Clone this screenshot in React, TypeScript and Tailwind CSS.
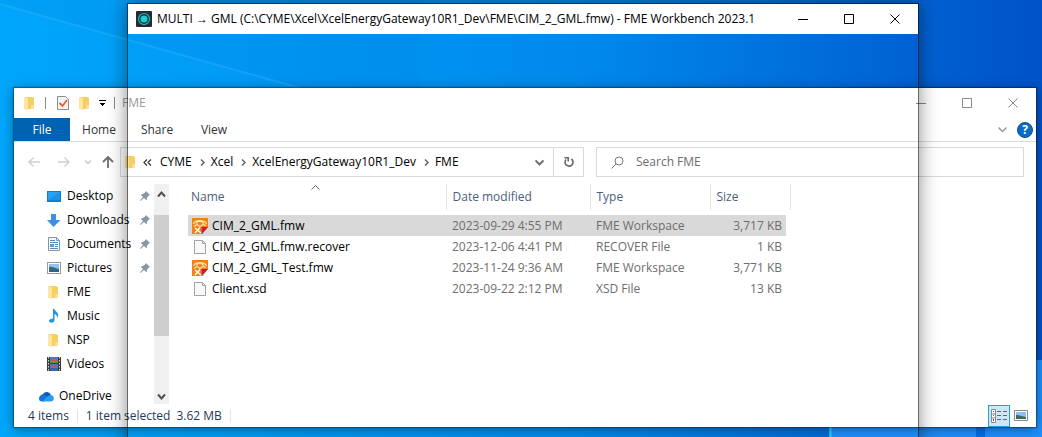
import { ReactNode } from "react"
import clsx from "clsx"

const places = [
  { name: "Desktop", icon: <DesktopIcon />, pinned: true },
  { name: "Downloads", icon: <DownloadIcon />, pinned: true },
  { name: "Documents", icon: <DocumentIcon />, pinned: true },
  { name: "Pictures", icon: <PictureIcon />, pinned: true },
  { name: "FME", icon: <FolderIcon />, pinned: false },
  { name: "Music", icon: <MusicIcon />, pinned: false },
  { name: "NSP", icon: <FolderIcon />, pinned: false },
  { name: "Videos", icon: <VideoIcon />, pinned: false },
]

const files = [
  { name: "CIM_2_GML.fmw", date: "2023-09-29 4:55 PM", type: "FME Workspace", size: "3,717 KB", icon: <FmeIcon />, selected: true },
  { name: "CIM_2_GML.fmw.recover", date: "2023-12-06 4:41 PM", type: "RECOVER File", size: "1 KB", icon: <FileIcon />, selected: false },
  { name: "CIM_2_GML_Test.fmw", date: "2023-11-24 9:36 AM", type: "FME Workspace", size: "3,771 KB", icon: <FmeIcon />, selected: false },
  { name: "Client.xsd", date: "2023-09-22 2:12 PM", type: "XSD File", size: "13 KB", icon: <FileIcon />, selected: false },
]

const crumbs = ["CYME", "Xcel", "XcelEnergyGateway10R1_Dev", "FME"]

function FolderIcon() {
  return (
    <svg width="16" height="16" viewBox="0 0 16 16">
      <path d="M3 2h7l2 1v11H3z" fill="#f5cf62" />
      <path d="M2 2l4 1v12l-4-1z" fill="#ffe69b" />
      <path d="M9.500 10h2.500v4H9z" fill="#fbe29a" />
    </svg>
  )
}

function DesktopIcon() {
  return (
    <svg width="16" height="16" viewBox="0 0 16 16">
      <rect x="1" y="3" width="14" height="11" fill="#0a7fd6" />
      <path d="M2 4h12v8H2z" fill="#27a4f2" />
      <path d="M2 12L14 4v8z" fill="#1c93e6" />
    </svg>
  )
}

function DownloadIcon() {
  return (
    <svg width="16" height="16" viewBox="0 0 16 16">
      <path d="M5 2h5v6h4.500L7.500 15 1 8h4z" fill="#3b8ee0" />
    </svg>
  )
}

function DocumentIcon() {
  return (
    <svg width="16" height="16" viewBox="0 0 16 16">
      <path d="M2.500 1.500h8l3 3v10h-11z" fill="#f7f9fb" stroke="#8b949c" />
      <path d="M10.500 1.500v3h3" fill="none" stroke="#8b949c" />
      <path d="M4 4.500h5M4 6.500h8M9 8.500h3M9 10.500h3M4 12.500h8" stroke="#4d8fc9" />
      <rect x="4" y="8" width="4" height="3" fill="#5d9bd0" />
    </svg>
  )
}

function PictureIcon() {
  return (
    <svg width="16" height="16" viewBox="0 0 16 16">
      <rect x="1.500" y="2.500" width="13" height="11" fill="#fff" stroke="#9a9a9a" />
      <rect x="3" y="4" width="10" height="8" fill="#8fc4ee" />
      <path d="M3 7c3-1 5 1 10 2v2H3z" fill="#3c6a6e" />
      <path d="M3 10h10v2H3z" fill="#2f5f9c" />
    </svg>
  )
}

function MusicIcon() {
  return (
    <svg width="16" height="16" viewBox="0 0 16 16">
      <path d="M7 1h1.500c.3 2.500 3.700 3 3.700 6 0 1.200-.5 2-1.200 2.800C11.300 7.500 10 6.500 8.500 6v6c0 1.800-1.300 2.700-2.800 2.700S3 14 3 12.800 4.300 10.500 7 10.700z" fill="#1c95e8" />
    </svg>
  )
}

function VideoIcon() {
  return (
    <svg width="16" height="16" viewBox="0 0 16 16">
      <rect x="1" y="1" width="14" height="14" fill="#3a3a3a" />
      <path d="M2.500 1v14M13.500 1v14" stroke="#dcdcdc" strokeDasharray="1.500 1.500" />
      <rect x="4" y="1" width="8" height="6" fill="#4a79c9" />
      <path d="M5 5l3-3 3 3z" fill="#d9572c" />
      <path d="M4 5h8v2H4z" fill="#5c9d3d" />
      <rect x="4" y="8" width="8" height="7" fill="#4a79c9" />
      <path d="M5 12l3-3 3 3z" fill="#d9572c" />
      <path d="M4 12h8v3H4z" fill="#3c62a8" />
    </svg>
  )
}

function OneDriveIcon() {
  return (
    <svg width="17" height="16" viewBox="0 0 17 16">
      <path d="M5 6a4.500 4.500 0 0 1 8 1l-3 4-6-4z" fill="#0a5cb8" />
      <path d="M1 10.500C1 8 3 6 6 6.500l5 3-5 4H4a3 3 0 0 1-3-3z" fill="#0f77d4" />
      <path d="M12.500 7a3.300 3.300 0 0 1 .8 6.500H4.200L10 8z" fill="#2a9df0" />
    </svg>
  )
}

function FileIcon() {
  return (
    <svg width="16" height="16" viewBox="0 0 16 16">
      <path d="M2.500 1.500h8l3 3v10h-11z" fill="#f8f8f8" stroke="#a3a3a3" />
      <path d="M10.500 1.500v3h3" fill="none" stroke="#a3a3a3" />
    </svg>
  )
}

function FmeIcon() {
  return (
    <svg width="16" height="16" viewBox="0 0 16 16">
      <path d="M0 0h16v9l-6 7H0z" fill="#ee8212" />
      <path d="M1.500 6c1-4 11-5 13 0M4 5.500l2-2h3l3 2M2 8.500l3-2 3 2 3-2 3 1" fill="none" stroke="#ffe0b0" strokeWidth="1.200" />
      <path d="M3 10l6 5M3 15l5-5.500" fill="none" stroke="#fff" strokeWidth="1.400" />
      <path d="M9.500 9H16l-6 7z" fill="#c8202f" />
    </svg>
  )
}

function PinIcon() {
  return (
    <svg width="12" height="12" viewBox="0 0 12 12">
      <path d="M7 1l4 4-1.200.6L8 8l-.4 2.500L5 8 1.500 11 1 10.500 4 7 1.500 4.400 4 4l2.400-1.800z" fill="#8996a3" />
    </svg>
  )
}

function Chevron({ d, size = 9, color = "#666", width = 1.5 }: { d: string; size?: number; color?: string; width?: number }) {
  return (
    <svg width={size} height={size} viewBox="0 0 9 9" className="shrink-0">
      <path d={d} fill="none" stroke={color} strokeWidth={width} />
    </svg>
  )
}

function CaptionButtons({ color }: { color: string }) {
  const shapes = [
    { label: "Minimize", d: "M0 5.500h10" },
    { label: "Maximize", d: "M.5.5h9v9h-9z" },
    { label: "Close", d: "M.5.5l9 9M9.500.5l-9 9" },
  ]
  return (
    <div className="flex shrink-0">
      {shapes.map((shape) => (
        <button key={shape.label} aria-label={shape.label} className="flex h-7 w-[46px] items-center justify-center">
          <svg width="10" height="10" viewBox="0 0 10 10">
            <path d={shape.d} fill="none" stroke={color} />
          </svg>
        </button>
      ))}
    </div>
  )
}

function IconButton({ label, className, children }: { label: string; className?: string; children: ReactNode }) {
  return (
    <button aria-label={label} className={clsx("flex shrink-0 items-center justify-center", className)}>
      {children}
    </button>
  )
}

function Wallpaper() {
  return (
    <div className="absolute inset-0 bg-linear-to-r from-[#00a6fb] via-[#008aec] via-55% to-[#0052c8]">
      <svg className="h-full w-full" viewBox="0 0 1042 437" preserveAspectRatio="none">
        <path d="M0 0h420v88H300L0 4z" fill="#0070d0" fillOpacity=".1" />
        <path d="M0 4L300 88" stroke="#3db6ff" strokeOpacity=".35" strokeWidth="2" />
        <path d="M829 420h207V360h6v77H829z" fill="#1e90ff" />
        <path d="M830.500 420v17" stroke="#20d8ff" strokeWidth="2" />
        <path d="M976 420h9v17h-9z" fill="#0070e8" />
      </svg>
    </div>
  )
}

function Explorer() {
  return (
    <section className="absolute top-[88px] right-1.5 bottom-2.5 left-3.5 flex flex-col bg-white shadow-[0_0_1px_1px_rgba(0,0,0,0.3),0_2px_12px_rgba(0,0,0,0.4)]">
      <header className="flex h-[30px] shrink-0 items-center justify-between">
        <div className="flex items-center pl-2 text-[#999]">
          <FolderIcon />
          <span className="mx-[7px] h-3 w-px bg-[#888]" />
          <IconButton label="Properties" className="ml-0.5">
            <svg width="16" height="16" viewBox="0 0 16 16">
              <path d="M2.500 1.500h8l3 3v10h-11z" fill="#f4f4f4" stroke="#8c8c8c" />
              <path d="M4.500 8l3 3 4.500-6" fill="none" stroke="#f0602c" strokeWidth="1.800" />
            </svg>
          </IconButton>
          <IconButton label="New folder" className="ml-1.5">
            <FolderIcon />
          </IconButton>
          <IconButton label="Customize toolbar" className="ml-1.5">
            <svg width="8" height="8" viewBox="0 0 8 8">
              <path d="M0 1h7v1H0zM1 4h5v1H5v1H4v1H3V6H2V5H1z" fill="#000" />
            </svg>
          </IconButton>
          <span className="mx-[7px] h-3 w-px bg-[#888]" />
          <h2>FME</h2>
        </div>
        <CaptionButtons color="#888" />
      </header>

      <nav className="flex h-6 shrink-0 items-center border-b border-[#dadbdc] text-[#333]">
        <button className="h-full w-14 bg-[#0063b1] text-white">File</button>
        <button className="h-full w-[58px]">Home</button>
        <button className="h-full w-[58px]">Share</button>
        <button className="h-full w-14">View</button>
        <IconButton label="Expand ribbon" className="mr-2.5 ml-auto">
          <Chevron d="M.5 2.500l4 4 4-4" color="#999" />
        </IconButton>
        <IconButton label="Help" className="mr-[3px] h-4 w-4 rounded-full border border-[#0a4f8c] bg-[#0a6cc8] font-bold text-white">
          ?
        </IconButton>
      </nav>

      <div className="flex h-10 shrink-0 items-center pr-3 pl-3">
        <IconButton label="Back" className="w-4">
          <svg width="12" height="12" viewBox="0 0 12 12">
            <path d="M12 6H1M5.500 1.500L1 6l4.500 4.500" fill="none" stroke="#d0d0d0" strokeWidth="1.500" />
          </svg>
        </IconButton>
        <IconButton label="Forward" className="ml-3.5 w-4">
          <svg width="12" height="12" viewBox="0 0 12 12">
            <path d="M0 6h11M6.500 1.500L11 6l-4.500 4.500" fill="none" stroke="#d0d0d0" strokeWidth="1.500" />
          </svg>
        </IconButton>
        <IconButton label="Recent locations" className="ml-2 w-4">
          <Chevron d="M1 3l3.500 3L8 3" size={8} color="#ccc" />
        </IconButton>
        <IconButton label="Up" className="ml-1 w-4">
          <svg width="12" height="12" viewBox="0 0 12 12">
            <path d="M6 12V1M1 6l5-5 5 5" fill="none" stroke="#6e6e6e" strokeWidth="1.800" />
          </svg>
        </IconButton>

        <div className="ml-1 flex h-[30px] w-[464px] shrink-0 items-center border border-[#d9d9d9] text-black">
          <span className="ml-0.5"><FolderIcon /></span>
          <span className="ml-1">
            <svg width="9" height="9" viewBox="0 0 9 9">
              <path d="M4 1.500l-3 3 3 3M8 1.500l-3 3 3 3" fill="none" stroke="#333" strokeWidth="1.200" />
            </svg>
          </span>
          {crumbs.map((crumb, index) => (
            <span key={crumb} className="flex items-center">
              {index > 0 && (
                <span className="ml-1.5">
                  <Chevron d="M3 1.500l3 3-3 3" />
                </span>
              )}
              <button className={index > 0 ? "ml-1" : "ml-2"}>{crumb}</button>
            </span>
          ))}
          <IconButton label="Previous locations" className="ml-auto w-7">
            <Chevron d="M.5 2.500l4 4 4-4" width={1.8} />
          </IconButton>
          <IconButton label="Refresh" className="h-full w-[30px] border-l border-[#d9d9d9]">
            <svg width="12" height="12" viewBox="0 0 12 12">
              <path d="M8.500 3A4 4 0 1 1 3 3.500" fill="none" stroke="#666" strokeWidth="1.600" />
              <path d="M1.500 1.800H5.200V5.500" fill="none" stroke="#666" strokeWidth="1.500" />
            </svg>
          </IconButton>
        </div>

        <label className="ml-3 flex h-[30px] min-w-0 grow items-center border border-[#d9d9d9] pl-3.5">
          <svg width="13" height="13" viewBox="0 0 13 13">
            <circle cx="8" cy="5" r="4" fill="none" stroke="#777" />
            <path d="M5 8l-4.500 4.500" stroke="#777" />
          </svg>
          <input aria-label="Search FME" placeholder="Search FME" className="ml-3 min-w-0 grow outline-none placeholder:text-[#6d6d6d]" />
        </label>
      </div>

      <div className="flex min-h-0 grow pt-0.5">
        <aside className="w-[140px] shrink-0 text-black">
          {places.map((place) => (
            <a key={place.name} href="#" className="flex h-6 items-center pr-[3px] pl-8">
              {place.icon}
              <span className="ml-[5px]">{place.name}</span>
              {place.pinned && (
                <span className="ml-auto">
                  <PinIcon />
                </span>
              )}
            </a>
          ))}
          <a href="#" className="mt-2 flex h-6 items-center pl-6">
            <OneDriveIcon />
            <span className="ml-1">OneDrive</span>
          </a>
        </aside>

        <div className="flex w-[15px] shrink-0 flex-col bg-[#f0f0f0]">
          <IconButton label="Scroll up" className="h-5">
            <Chevron d="M1 6.500l3.500-4 3.500 4" width={2} color="#505050" />
          </IconButton>
          <div className="mt-[11px] h-[121px] bg-[#cdcdcd]" />
          <IconButton label="Scroll down" className="mt-auto h-4">
            <Chevron d="M1 2.500l3.500 4 3.500-4" width={2} color="#505050" />
          </IconButton>
        </div>

        <div className="relative ml-[19px]">
          <span className="absolute top-0 left-[123px]">
            <Chevron d="M.5 5.500l4-4 4 4" width={1} />
          </span>
          <table className="w-[602px] table-fixed border-collapse text-left">
            <colgroup>
              <col className="w-[258px]" />
              <col className="w-36" />
              <col className="w-[120px]" />
              <col className="w-[76px]" />
              <col className="w-1" />
            </colgroup>
            <thead className="text-[#4c607a]">
              <tr className="h-[26px]">
                <th className="border-r border-[#e5e5e5] pl-[3px] font-normal">Name</th>
                <th className="border-r border-[#e5e5e5] pl-1.5 font-normal">Date modified</th>
                <th className="border-r border-[#e5e5e5] pl-1.5 font-normal">Type</th>
                <th colSpan={2} className="border-r border-[#e5e5e5] pl-1.5 font-normal">Size</th>
              </tr>
            </thead>
            <tbody className="text-[#6d6d6d]">
              <tr className="h-[5px]" />
              {files.map((file) => {
                const fill = file.selected && "bg-[#d9d9d9]"
                return (
                  <tr key={file.name} className="h-[21px]">
                    <td className={clsx("pl-1 text-black", fill)}>
                      <span className="flex items-center gap-1">
                        {file.icon}
                        {file.name}
                      </span>
                    </td>
                    <td className={clsx("pl-1.5", fill)}>{file.date}</td>
                    <td className={clsx("pl-1.5", fill)}>{file.type}</td>
                    <td className={clsx("pr-1 text-right", fill)}>{file.size}</td>
                  </tr>
                )
              })}
            </tbody>
          </table>
        </div>
      </div>

      <footer className="flex h-[23px] shrink-0 items-center pr-2 pl-3.5 text-[#1e395b]">
        <span>4 items</span>
        <span className="mx-2 h-3.5 w-px bg-[#e5e5e5]" />
        <span>1 item selected</span>
        <span className="ml-1.5">3.62 MB</span>
        <span className="ml-2 h-3.5 w-px bg-[#e5e5e5]" />
        <IconButton label="Details view" className="ml-auto h-[22px] w-[22px] border border-[#26a0da] bg-[#cce8f6]">
          <svg width="16" height="14" viewBox="0 0 16 14">
            <path d="M.5.5h4v13h-4zM.5 5h4M.5 9h4" fill="#fff" stroke="#888" />
            <path d="M2 2h1v1H2z" fill="#555" />
            <path d="M2 6h1v1H2z" fill="#2a7fd0" />
            <path d="M2 10h1v2H2z" fill="#d02020" />
            <path d="M6 2.500h4M12 2.500h4M6 6.500h4M12 6.500h4M6 10.500h4M12 10.500h4" stroke="#666" />
          </svg>
        </IconButton>
        <IconButton label="Large icons view" className="ml-1">
          <svg width="14" height="11" viewBox="0 0 14 11">
            <path d="M.5.5h13v10H.5z" fill="#fff" stroke="#888" />
            <path d="M2 2h10v7H2z" fill="#8cc0f0" />
            <path d="M2 5c3 0 5 1 10 2v2H2z" fill="#3c6a5e" />
          </svg>
        </IconButton>
      </footer>
    </section>
  )
}

function Workbench() {
  return (
    <section className="pointer-events-none absolute top-[3px] right-[123px] -bottom-4 left-[127px] border border-black/60 shadow-[0_0_18px_rgba(0,0,0,0.45)]">
      <header className="flex h-[30px] items-center justify-between bg-white">
        <div className="flex items-center gap-[5px] pl-2 text-black">
          <svg width="16" height="16" viewBox="0 0 16 16">
            <rect width="16" height="16" rx="1" fill="#262b30" />
            <circle cx="8" cy="8" r="5.500" fill="none" stroke="#18c4cc" strokeWidth="1.200" />
            <circle cx="8" cy="8" r="3.500" fill="#18d0d8" />
          </svg>
          <h1 className="whitespace-nowrap">MULTI → GML (C:\CYME\Xcel\XcelEnergyGateway10R1_Dev\FME\CIM_2_GML.fmw) - FME Workbench 2023.1</h1>
        </div>
        <CaptionButtons color="#000" />
      </header>
    </section>
  )
}

export default function App() {
  return (
    <main className="relative h-screen overflow-hidden font-['Open_Sans',sans-serif] text-[12px] leading-4">
      <Wallpaper />
      <Explorer />
      <Workbench />
    </main>
  )
}
